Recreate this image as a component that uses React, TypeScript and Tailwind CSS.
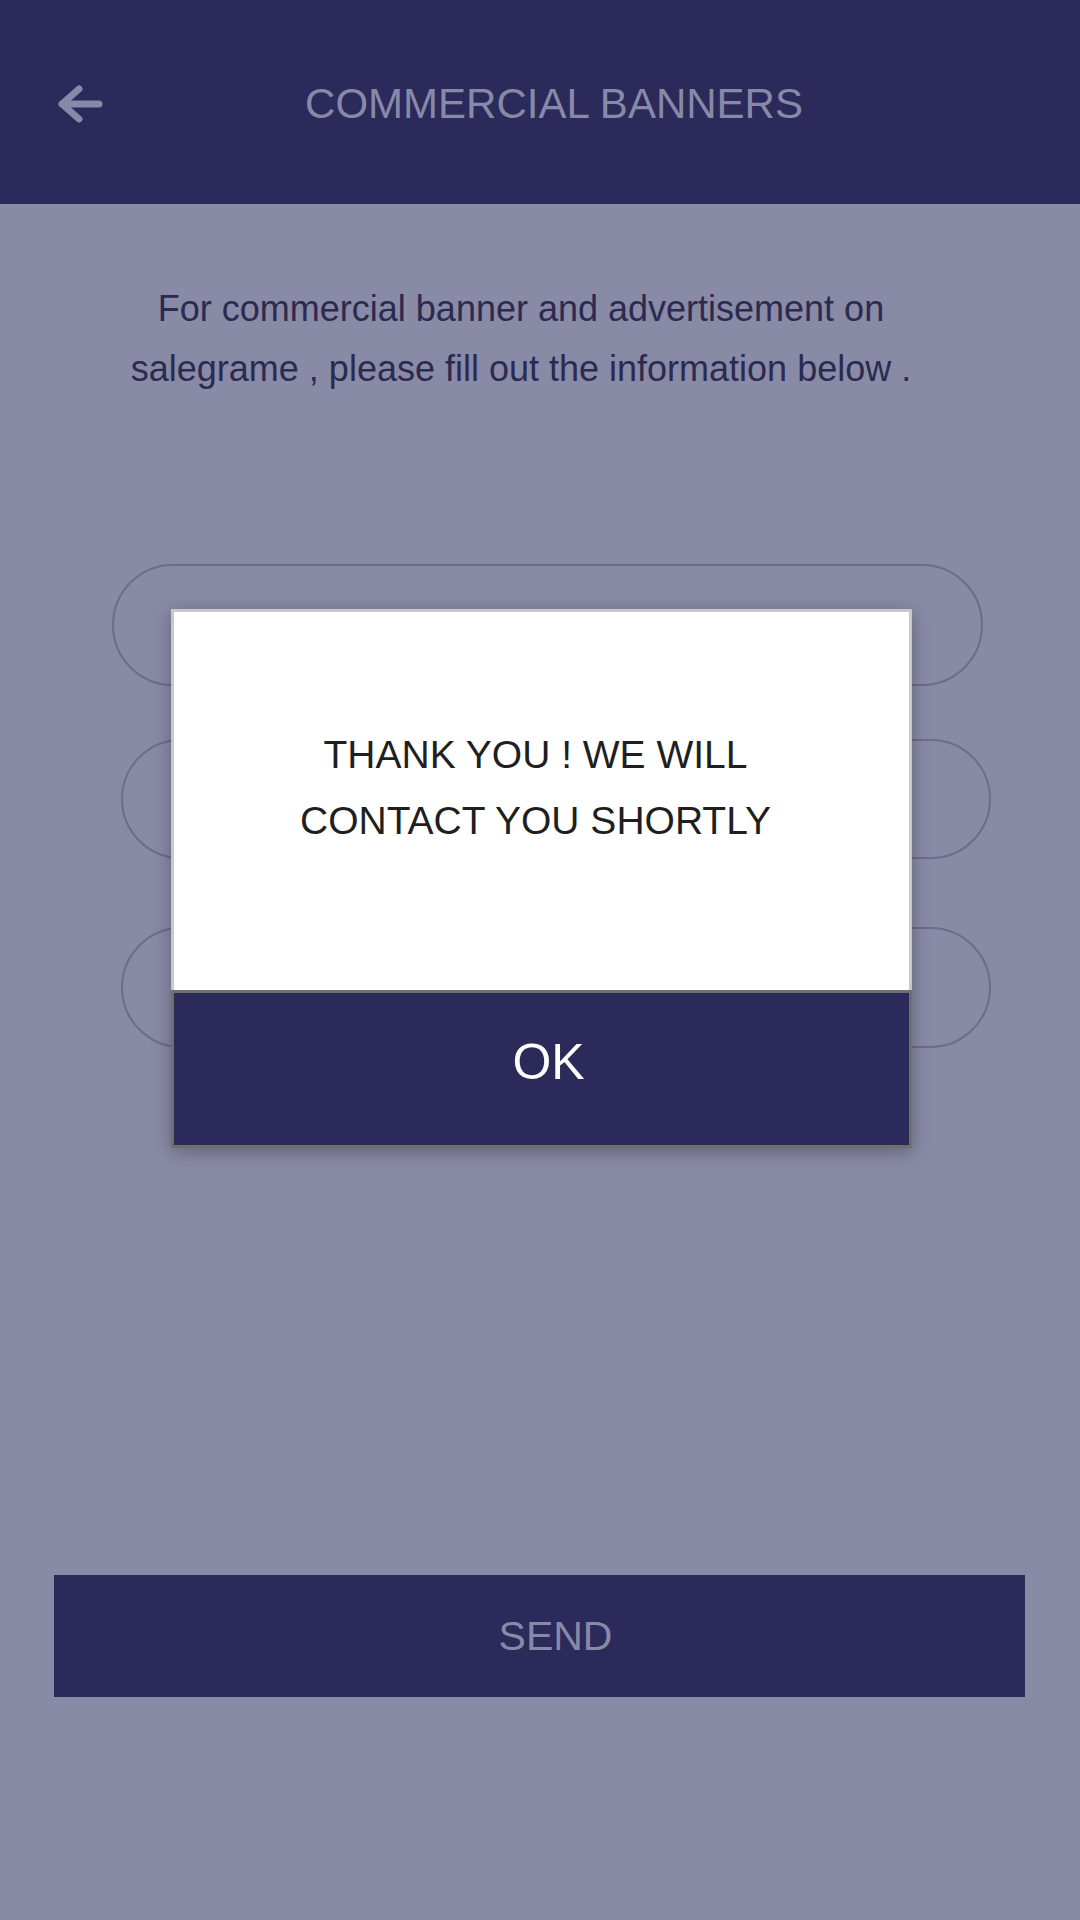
import React from "react";

// Outlined pill-shaped input placeholder
const Pill: React.FC<{ className: string }> = ({ className }) => (
  <div className={`rounded-full border-2 border-[#6c6c8c] ${className}`} />
);

const App: React.FC = () => {
  return (
    <div
      className="relative w-[1080px] h-[1920px] overflow-hidden bg-[#898aa5]"
      style={{ fontFamily: '"Liberation Sans", Arial, sans-serif' }}
    >
      {/* Header */}
      <div className="h-[204px] bg-[#2b2a5a] flex items-center pt-[4px]">
        <div className="w-[104px] pl-[54px] flex items-center">
          <svg width="50" height="44" viewBox="0 0 50 44" fill="none">
            <path
              d="M45 22 H8 M25 7 L8 22 L25 37"
              stroke="#8889a8"
              strokeWidth="7"
              strokeLinecap="round"
              strokeLinejoin="round"
            />
          </svg>
        </div>
        <h1 className="flex-1 pr-[76px] text-center text-[42px] leading-[42px] text-[#8889a8]">
          COMMERCIAL BANNERS
        </h1>
      </div>

      {/* Body */}
      <div className="flex flex-col">
        <p className="mt-[75px] pr-[38px] text-center text-[36px] leading-[60px] text-[#2b2a50]">
          For commercial banner and advertisement on
          <br />
          salegrame , please fill out the information below .
        </p>

        <Pill className="mt-[165px] ml-[112px] w-[871px] h-[122px]" />
        <Pill className="mt-[53px] ml-[121px] w-[870px] h-[120px]" />
        <Pill className="mt-[68px] ml-[121px] w-[870px] h-[121px]" />

        <button className="mt-[527px] ml-[54px] w-[971px] h-[122px] bg-[#2b2a5a] flex items-center justify-center pl-[32px] text-[41px] leading-[41px] text-[#8889a8]">
          SEND
        </button>
      </div>

      {/* Dialog */}
      <div className="absolute left-[171px] top-[609px] w-[741px] flex flex-col shadow-[0_4px_18px_rgba(0,0,0,0.28)]">
        <div className="h-[381px] bg-white border-[3px] border-b-0 border-[#c8c8c8] flex flex-col items-center pt-[110px] pr-[12px]">
          <p className="text-center text-[39px] leading-[66px] text-[#1f1f1f]">
            THANK YOU ! WE WILL
            <br />
            CONTACT YOU SHORTLY
          </p>
        </div>
        <div className="h-[158px] bg-[#2b2a5a] border-[3px] border-[#6f6f6f] flex justify-center pt-[44px] pl-[14px]">
          <span className="text-[50px] leading-[50px] text-white">OK</span>
        </div>
      </div>
    </div>
  );
};

export default App;
